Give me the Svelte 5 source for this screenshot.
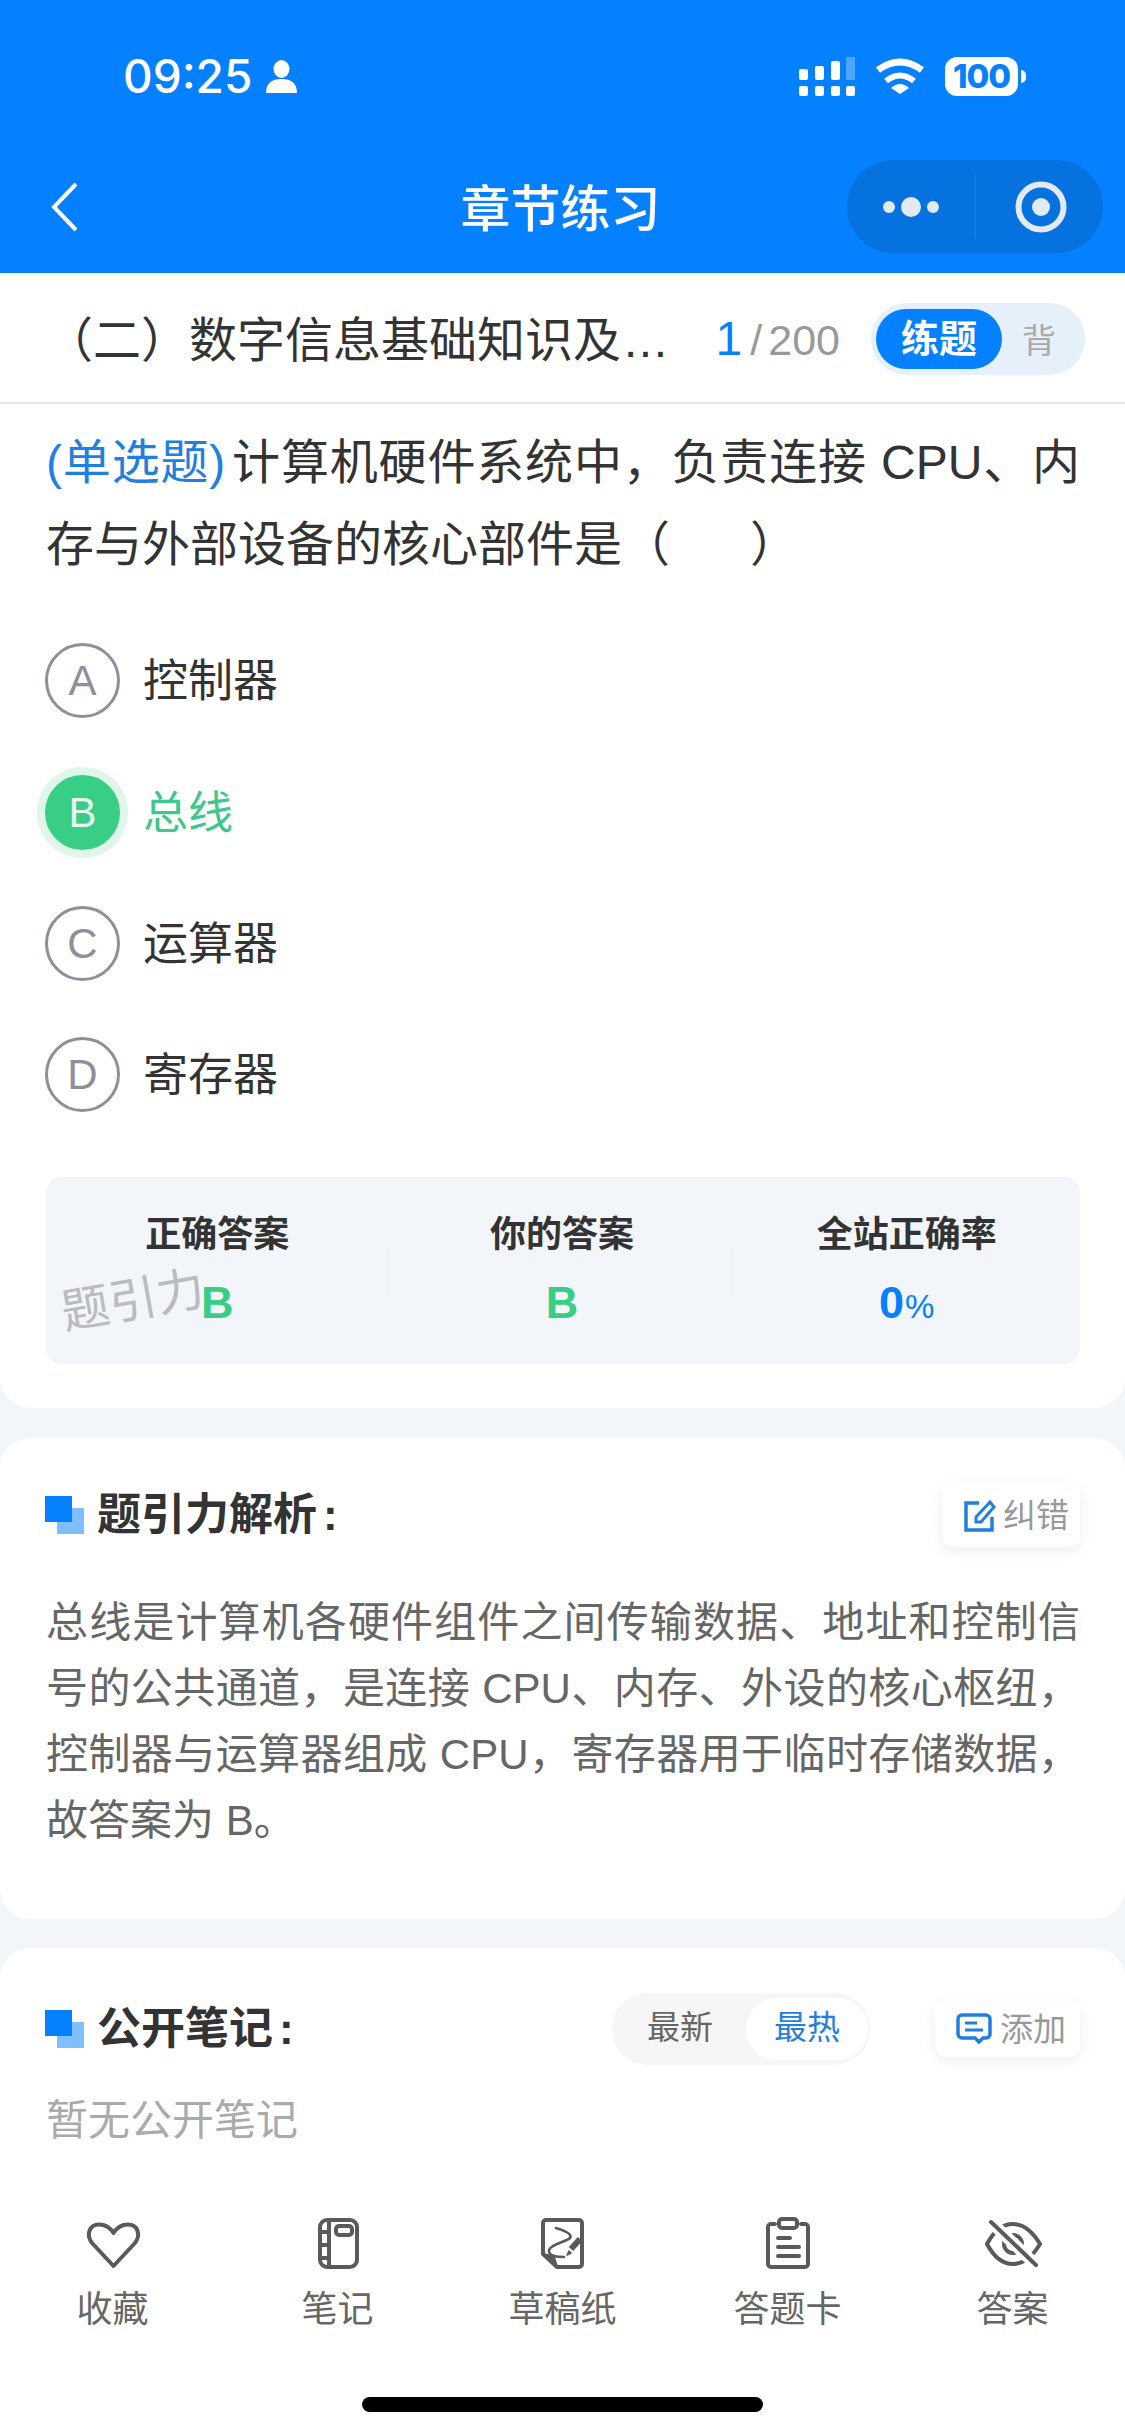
<script>
  const options = [
    { key: 'A', text: '控制器', picked: false },
    { key: 'B', text: '总线', picked: true },
    { key: 'C', text: '运算器', picked: false },
    { key: 'D', text: '寄存器', picked: false }
  ];
</script>

<div class="page">
  <header class="header">
    <div class="status">
      <span class="time">09:25</span>
      <svg class="person" width="31" height="33" viewBox="0 0 31 33" fill="#fff">
        <ellipse cx="15.5" cy="9" rx="8" ry="9" />
        <path d="M0 33 C0 23 6 19 15.5 19 C25 19 31 23 31 33 Z" />
      </svg>
      <span class="spacer"></span>
      <svg width="56" height="39" viewBox="0 0 56 39" fill="#fff">
        <rect x="0" y="29" width="9" height="10" rx="2" />
        <rect x="16" y="29" width="9" height="10" rx="2" />
        <rect x="32" y="29" width="9" height="10" rx="2" />
        <rect x="47" y="29" width="9" height="10" rx="2" />
        <rect x="0" y="12" width="9" height="11" rx="2" />
        <rect x="16" y="9" width="9" height="14" rx="2" />
        <rect x="32" y="4" width="9" height="19" rx="2" />
        <rect x="47" y="0" width="9" height="23" rx="1" fill="#fff" opacity="0.3" />
      </svg>
      <svg class="wifi" width="50" height="36" viewBox="0 0 50 36" fill="none" stroke="#fff">
        <path d="M3 12 Q25 -4 47 12" stroke-width="7" />
        <path d="M11 23 Q25 12 39 23" stroke-width="6" />
        <path d="M16 30 Q25 22 34 30 L25 36 Z" fill="#fff" stroke="none" />
      </svg>
      <span class="battery">100</span>
    </div>
    <nav class="nav">
      <svg class="back" width="27" height="50" viewBox="0 0 27 50" fill="none" stroke="#fff" stroke-width="4">
        <path d="M25 2 L3 25 L25 48" />
      </svg>
      <span class="nav-title">章节练习</span>
      <div class="capsule">
        <svg width="128" height="93" viewBox="0 0 128 93" fill="#E3EAF4">
          <circle cx="42" cy="47" r="6" />
          <circle cx="64" cy="47" r="10" />
          <circle cx="86" cy="47" r="6" />
        </svg>
        <span class="capsule-line"></span>
        <svg width="128" height="93" viewBox="0 0 128 93">
          <circle cx="65" cy="47" r="22.5" fill="none" stroke="#E3EAF4" stroke-width="6" />
          <circle cx="65" cy="47" r="9" fill="#E3EAF4" />
        </svg>
      </div>
    </nav>
  </header>

  <div class="subhead">
    <span class="sub-title">（二）数字信息基础知识及<span class="dots">...</span></span>
    <span class="counter"><b>1</b><i>/</i>200</span>
    <div class="mode">
      <span class="mode-on">练题</span>
      <span class="mode-off">背</span>
    </div>
  </div>

  <section class="card first">
    <p class="question"><span class="qtype">(单选题)</span>计算机硬件系统中，负责连接 CPU、内存与外部设备的核心部件是（&nbsp;&nbsp;&nbsp;&nbsp;&nbsp;&nbsp;）</p>

    <div class="options">
      {#each options as o}
        <div class="option" class:picked={o.picked}>
          <span class="badge">{o.key}</span>
          <span class="opt-text">{o.text}</span>
        </div>
      {/each}
    </div>

    <div class="answers">
      <div class="cell">
        <div class="cell-label">正确答案</div>
        <div class="cell-value green">B</div>
      </div>
      <div class="cell ruled">
        <div class="cell-label">你的答案</div>
        <div class="cell-value green">B</div>
      </div>
      <div class="cell ruled">
        <div class="cell-label">全站正确率</div>
        <div class="cell-value blue">0<small>%</small></div>
      </div>
      <span class="watermark">题引力</span>
    </div>
  </section>

  <section class="card second">
    <div class="row">
      <span class="mark"></span>
      <h2>题引力解析<span class="colon">:</span></h2>
      <span class="grow"></span>
      <button class="chip report">
        <svg width="34" height="36" viewBox="0 0 34 36" fill="none" stroke="#1E80E0" stroke-width="3.5">
          <path d="M16 6 H3 V33 H29 V20" />
          <path d="M13 20 L13 25 L18 25 L31 10 L27 5 Z" stroke-width="3" />
        </svg>
        <span class="chip-text">纠错</span>
      </button>
    </div>
    <p class="analysis">总线是计算机各硬件组件之间传输数据、地址和控制信号的公共通道，是连接 CPU、内存、外设的核心枢纽，控制器与运算器组成 CPU，寄存器用于临时存储数据，故答案为 B。</p>
  </section>

  <section class="card third">
    <div class="row">
      <span class="mark"></span>
      <h2>公开笔记<span class="colon">:</span></h2>
      <span class="grow"></span>
      <div class="sort">
        <span class="sort-item">最新</span>
        <span class="sort-item active">最热</span>
      </div>
      <button class="chip add">
        <svg width="36" height="32" viewBox="0 0 36 32" fill="none" stroke="#1E80E0" stroke-width="3.5">
          <path d="M6 2 H30 a4 4 0 0 1 4 4 V21 a4 4 0 0 1 -4 4 H27 L23 29 L19 25 H6 a4 4 0 0 1 -4 -4 V6 a4 4 0 0 1 4 -4 Z" />
          <path d="M9 10 H21 M9 17 H27" stroke-width="3" />
        </svg>
        <span class="chip-text">添加</span>
      </button>
    </div>
    <p class="empty">暂无公开笔记</p>
  </section>

  <footer class="tabbar">
    <div class="tabs">
      <div class="tab">
        <svg width="60" height="58" viewBox="0 0 60 58" fill="none" stroke="#5A5A5A" stroke-width="4" stroke-linejoin="round">
          <path d="M30.5 51 L9 28 C3 20 6 9.5 16 9.5 C23 9.5 28 14 30.5 18 C33 14 38 9.5 45 9.5 C55 9.5 58 20 52 28 Z" />
        </svg>
        <span>收藏</span>
      </div>
      <div class="tab">
        <svg width="60" height="58" viewBox="0 0 60 58" fill="none" stroke="#5A5A5A" stroke-width="4">
          <rect x="12" y="5" width="37" height="47" rx="7" />
          <path d="M21 5 V52 M12 17 H21 M12 30 H21 M12 43 H21" />
          <rect x="28" y="11" width="16" height="9" rx="3" />
        </svg>
        <span>笔记</span>
      </div>
      <div class="tab">
        <svg width="60" height="58" viewBox="0 0 60 58" fill="none" stroke="#5A5A5A" stroke-width="4" stroke-linejoin="round">
          <path d="M13 5 H46 a3 3 0 0 1 3 3 V49 a3 3 0 0 1 -3 3 H24 L10 39 V8 a3 3 0 0 1 3 -3 Z" />
          <path d="M11 39 L24 51 L21 41 Z" fill="#5A5A5A" stroke-width="1.5" />
          <path d="M23 13 C30 15 40 19 37 23 C33 27 18 29 16 35 C15 41 24 42 31 42" stroke-width="2.6" stroke-linecap="round" />
          <path d="M47 24 L38 34" stroke-width="6" />
          <path d="M36 36 L34 40 L38 38 Z" fill="#5A5A5A" stroke-width="1.5" />
        </svg>
        <span>草稿纸</span>
      </div>
      <div class="tab">
        <svg width="60" height="58" viewBox="0 0 60 58" fill="none" stroke="#5A5A5A" stroke-width="4" stroke-linecap="round">
          <path d="M17 9 H13 a3 3 0 0 0 -3 3 V49 a3 3 0 0 0 3 3 H47 a3 3 0 0 0 3 -3 V12 a3 3 0 0 0 -3 -3 H43" />
          <rect x="21" y="4" width="18" height="9" rx="3" />
          <path d="M20 23 H32 M20 32 H41 M20 41 H41" />
        </svg>
        <span>答题卡</span>
      </div>
      <div class="tab">
        <svg width="60" height="58" viewBox="0 0 60 58" fill="none" stroke="#5A5A5A" stroke-width="4" stroke-linecap="round">
          <path d="M4 29 C12 14 22 9 30 9 C38 9 48 14 57 29 C48 44 38 49 30 49 C22 49 12 44 4 29 Z" />
          <circle cx="30" cy="29" r="9" />
          <path d="M8 7 L53 50" stroke="#fff" stroke-width="12" stroke-linecap="butt" />
          <path d="M8 7 L53 50" />
        </svg>
        <span>答案</span>
      </div>
    </div>
    <div class="home"></div>
  </footer>
</div>

<style>
  :global(body) {
    margin: 0;
  }

  .page {
    position: relative;
    width: 1125px;
    height: 2436px;
    display: flex;
    flex-direction: column;
    overflow: hidden;
    background: #f2f5f9;
    color: #333;
    font-family: "Liberation Sans", "Noto Sans CJK SC", sans-serif;
  }

  .header {
    height: 273px;
    background: #0580ff;
    color: #fff;
  }

  .status {
    height: 152px;
    padding: 0 98px 0 123px;
    display: flex;
    align-items: center;
    box-sizing: border-box;
  }

  .time {
    font-family: Inter, sans-serif;
    font-size: 46px;
    font-weight: 500;
    line-height: 1;
  }

  .person {
    margin-left: 14px;
  }

  .spacer {
    flex: 1;
  }

  .wifi {
    margin: 0 20px;
  }

  .battery {
    position: relative;
    width: 73px;
    height: 39px;
    border-radius: 12px;
    background: #fff;
    color: #0580ff;
    font-family: Inter, sans-serif;
    font-size: 33px;
    font-weight: 800;
    line-height: 39px;
    letter-spacing: -1px;
    text-align: center;
    margin-right: 9px;
  }

  .battery::after {
    content: "";
    position: absolute;
    left: 76px;
    top: 13px;
    width: 5px;
    height: 13px;
    border-radius: 0 6px 6px 0;
    background: #fff;
  }

  .nav {
    height: 93px;
    margin-top: 8px;
    display: grid;
    grid-template-columns: 1fr auto 1fr;
    grid-template-rows: 93px;
    align-items: center;
  }

  .back {
    margin-left: 51px;
  }

  .nav-title {
    height: 93px;
    font-size: 50px;
    font-weight: 500;
    line-height: 100px;
    margin-left: -4px;
  }

  .capsule {
    justify-self: end;
    margin-right: 22px;
    width: 256px;
    height: 93px;
    border-radius: 47px;
    background: #0572df;
    display: flex;
    align-items: center;
  }

  .capsule-line {
    width: 1px;
    height: 65px;
    background: rgba(255, 255, 255, 0.12);
    flex: none;
  }

  .capsule svg {
    flex: none;
  }

  .subhead {
    height: 131px;
    box-sizing: border-box;
    padding: 2px 40px 0 45px;
    background: #fff;
    border-bottom: 2px solid #e8e8e8;
    display: flex;
    align-items: center;
  }

  .sub-title {
    font-size: 48px;
    white-space: nowrap;
    color: #333;
    flex: 1;
    padding-bottom: 5px;
  }

  .dots {
    margin-left: 3px;
    letter-spacing: 1.5px;
  }

  .counter {
    font-size: 43px;
    color: #999;
    margin-right: 31px;
    display: flex;
    align-items: baseline;
  }

  .counter b {
    color: #0580ff;
    font-weight: 400;
    font-size: 48px;
  }

  .counter i {
    font-style: normal;
    margin: 0 6px 0 8px;
  }

  .mode {
    width: 214px;
    height: 72px;
    border-radius: 36px;
    background: #e5f0fb;
    display: flex;
    align-items: center;
    padding-left: 5px;
    box-sizing: border-box;
  }

  .mode-on {
    width: 126px;
    height: 60px;
    border-radius: 30px;
    background: #0580ff;
    color: #fff;
    font-size: 38px;
    font-weight: 700;
    line-height: 60px;
    text-align: center;
  }

  .mode-off {
    margin-left: 20px;
    font-size: 34px;
    color: #aaa;
  }

  .card {
    background: #fff;
    border-radius: 30px;
    padding: 0 45px 0 46px;
  }

  .first {
    height: 1004px;
    box-sizing: border-box;
    padding-top: 18px;
    border-radius: 0 0 30px 30px;
  }

  .question {
    margin: 0;
    font-size: 48px;
    line-height: 82px;
    color: #333;
    text-align: justify;
  }

  .qtype {
    color: #1e80e0;
    margin-right: 6px;
  }

  .options {
    margin-top: 29px;
  }

  .option {
    height: 131.4px;
    display: flex;
    align-items: center;
    font-size: 45px;
    color: #333;
  }

  .opt-text {
    padding-bottom: 6px;
  }

  .badge {
    width: 75px;
    height: 75px;
    box-sizing: border-box;
    border: 3px solid #8e8e9c;
    border-radius: 50%;
    color: #8e8e9c;
    font-size: 42px;
    line-height: 69px;
    text-align: center;
    margin-right: 23px;
    margin-left: -1px;
  }

  .picked {
    color: #3dc78a;
  }

  .picked .badge {
    background: #38ce86;
    border-color: #38ce86;
    color: #e6f8ef;
    box-shadow: 0 0 0 8px #e0f6eb;
  }

  .answers {
    position: relative;
    margin-top: 36px;
    height: 187px;
    box-sizing: border-box;
    padding-top: 33px;
    border-radius: 16px;
    background: #f2f5f9;
    display: grid;
    grid-template-columns: repeat(3, 1fr);
    text-align: center;
  }

  .cell {
    position: relative;
    left: -1px;
  }

  .ruled::before {
    content: "";
    position: absolute;
    left: -2px;
    top: 39px;
    height: 47px;
    width: 1px;
    background: #e6eaef;
  }

  .cell-label {
    font-size: 36px;
    font-weight: 700;
    line-height: 50px;
    color: #333;
  }

  .cell-value {
    margin-top: 13px;
    font-size: 45px;
    font-weight: 700;
    line-height: 60px;
  }

  .cell-value small {
    font-size: 33px;
    font-weight: 400;
    margin-left: 1px;
  }

  .green {
    color: #38ce86;
  }

  .blue {
    color: #0580ff;
  }

  .watermark {
    position: absolute;
    left: 15px;
    top: 94px;
    font-size: 48px;
    line-height: 60px;
    color: #b9bbbe;
    transform: rotate(-10deg);
  }

  .second {
    margin-top: 30px;
    height: 481px;
    box-sizing: border-box;
    padding-top: 45px;
  }

  .row {
    height: 64px;
    display: flex;
    align-items: center;
    position: relative;
  }

  .mark {
    position: relative;
    width: 39px;
    height: 38px;
    flex: none;
    margin: 0 13px 0 -1px;
  }

  .mark::before,
  .mark::after {
    content: "";
    position: absolute;
    width: 27px;
    height: 26px;
  }

  .mark::before {
    left: 12px;
    top: 12px;
    background: #80bfff;
  }

  .mark::after {
    left: 0;
    top: 0;
    background: #0580ff;
  }

  h2 {
    margin: 0;
    font-size: 44px;
    font-weight: 700;
    line-height: 64px;
    color: #333;
  }

  .colon {
    margin-left: 6px;
  }

  .grow {
    flex: 1;
  }

  .chip {
    border: 0;
    background: #fff;
    border-radius: 10px;
    box-shadow: 0 4px 14px rgba(0, 0, 0, 0.07);
    display: flex;
    align-items: center;
    padding: 0;
    color: #999;
    font-family: inherit;
    font-size: 33px;
    white-space: nowrap;
  }

  .chip-text {
    padding-bottom: 5px;
  }

  .report {
    width: 138px;
    height: 64px;
    padding-left: 21px;
    gap: 6px;
    box-sizing: border-box;
  }

  .add {
    width: 145px;
    height: 56px;
    padding-left: 21px;
    gap: 8px;
    margin-left: 65px;
    box-sizing: border-box;
  }

  .analysis {
    margin: 43px 0 0;
    font-size: 42px;
    line-height: 66px;
    color: #666;
    text-align: justify;
  }

  .third {
    flex: 1;
    margin-top: 29px;
    padding-top: 49px;
    border-radius: 30px 30px 0 0;
    min-height: 0;
  }

  .sort {
    width: 258px;
    height: 72px;
    border-radius: 36px;
    background: #f6f6f6;
    display: flex;
    align-items: center;
    justify-content: flex-end;
    padding-right: 2px;
    box-sizing: border-box;
    font-size: 33px;
  }

  .sort-item {
    width: 132px;
    height: 62px;
    line-height: 60px;
    text-align: center;
    color: #666;
    border-radius: 31px;
  }

  .sort-item.active {
    width: 122px;
    background: #fff;
    color: #1e80e0;
  }

  .empty {
    margin: 30px 0 0;
    font-size: 42px;
    line-height: 60px;
    color: #aaa;
  }

  .tabbar {
    height: 249px;
    background: #fff;
    padding-top: 28px;
    box-sizing: border-box;
  }

  .tabs {
    display: grid;
    grid-template-columns: repeat(5, 225px);
  }

  .tab {
    display: flex;
    flex-direction: column;
    align-items: center;
    font-size: 36px;
    line-height: 46px;
    color: #666;
  }

  .tab span {
    margin-top: 14px;
  }

  .home {
    width: 401px;
    height: 15px;
    margin: 64px auto 0;
    border-radius: 8px;
    background: #000;
  }
</style>
